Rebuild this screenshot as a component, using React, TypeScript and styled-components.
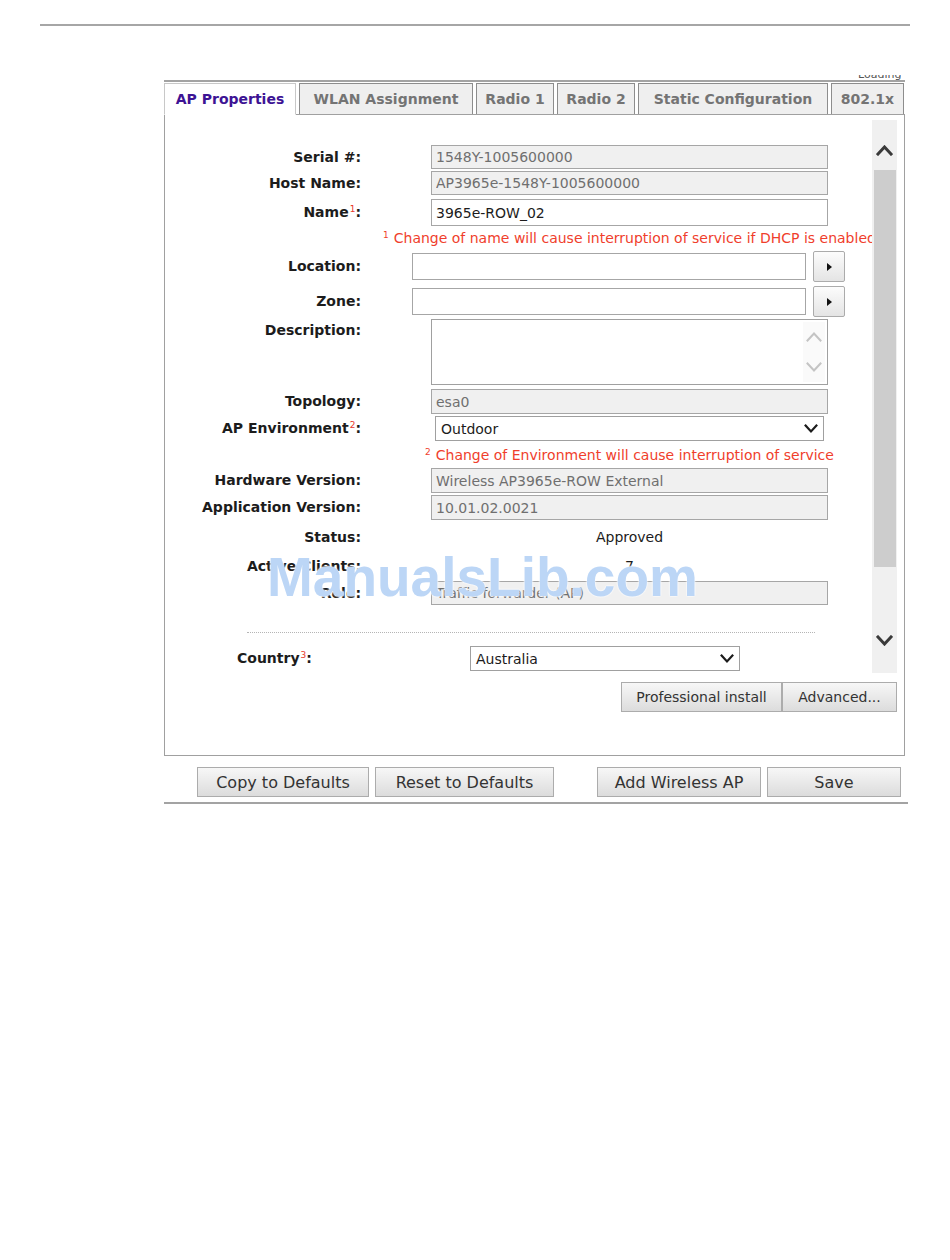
import React from "react";
import styled, { createGlobalStyle } from "styled-components";

const Global = createGlobalStyle`
  html, body { margin: 0; padding: 0; background: #fff; }
  body { font-family: "DejaVu Sans", Verdana, sans-serif; }
  * { box-sizing: border-box; }
`;

const Page = styled.div`
  position: relative;
  width: 950px;
  min-height: 1260px;
  padding-top: 24px;
`;

const TopRule = styled.div`
  margin: 0 40px;
  height: 2px;
  background: #a6a6a6;
`;

const Frame = styled.div`
  margin: 54px 0 0 164px;
  width: 744px;
`;

const TabStrip = styled.div`
  display: flex;
  gap: 3px;
  width: 741px;
  padding-top: 1px;
  border-top: 2px solid #a3a3a3;
  border-bottom: 1px solid #a0a0a0;
`;

const Tab = styled.div<{ $active?: boolean; $w: number }>`
  width: ${(p) => p.$w}px;
  flex: none;
  display: flex;
  align-items: center;
  justify-content: center;
  font-size: 14px;
  font-weight: bold;
  white-space: nowrap;
  color: ${(p) => (p.$active ? "#3d1394" : "#747474")};
  background: ${(p) => (p.$active ? "#fff" : "#efefef")};
  border: 1px solid ${(p) => (p.$active ? "#c8c8c8" : "#8d8d8d")};
  border-bottom: ${(p) => (p.$active ? "1px solid #fff" : "none")};
  margin-bottom: ${(p) => (p.$active ? "-1px" : "0")};
  height: ${(p) => (p.$active ? 32 : 31)}px;
`;

const Panel = styled.div`
  width: 741px;
  border: 1px solid #a0a0a0;
  border-top: none;
  padding: 5px 7px 43px 0;
`;

const ScrollArea = styled.div`
  display: flex;
`;

const Viewport = styled.div`
  width: 707px;
  height: 553px;
  overflow: hidden;
  padding-top: 25px;
`;

const Scrollbar = styled.div`
  width: 25px;
  height: 553px;
  background: #f0f0f0;
  display: flex;
  flex-direction: column;
  align-items: center;
`;

const ScrollIcon = styled.div<{ $mt: number }>`
  margin-top: ${(p) => p.$mt}px;
  display: flex;
  flex: none;
`;

const Thumb = styled.div`
  margin-top: 14px;
  width: 22px;
  height: 397px;
  background: #cdcdcd;
`;

const Row = styled.div<{ $mb: number }>`
  display: grid;
  grid-template-columns: 197px 510px;
  align-items: start;
  margin-bottom: ${(p) => p.$mb}px;
`;

const Label = styled.div<{ $lh: number }>`
  font-size: 14px;
  font-weight: bold;
  color: #1c1c1c;
  text-align: right;
  padding-right: 1px;
  line-height: ${(p) => p.$lh}px;
  white-space: nowrap;
`;

const Sup = styled.span`
  color: #e8382c;
  font-size: 9px;
  font-weight: normal;
  vertical-align: top;
  position: relative;
  top: -3px;
  margin-left: 1px;
`;

const Cell = styled.div<{ $indent: number }>`
  padding-left: ${(p) => p.$indent}px;
  display: flex;
  align-items: center;
  gap: 7px;
`;

const TextField = styled.input<{ $h: number; $w: number; $readOnlyLook?: boolean }>`
  width: ${(p) => p.$w}px;
  height: ${(p) => p.$h}px;
  margin: 0;
  padding: 0 4px;
  border: 1px solid #a6a6a6;
  border-radius: 0;
  outline: none;
  background: ${(p) => (p.$readOnlyLook ? "#f0f0f0" : "#fff")};
  color: ${(p) => (p.$readOnlyLook ? "#6f6f6f" : "#1c1c1c")};
  font-family: "DejaVu Sans", Verdana, sans-serif;
  font-size: 14px;
`;

const Note = styled.div`
  color: #f03e2c;
  font-size: 14px;
  line-height: 20px;
  white-space: nowrap;
`;

const NoteSup = styled.span`
  font-size: 9px;
  vertical-align: top;
  position: relative;
  top: -3px;
  margin-right: 5px;
`;

const LookupButton = styled.button`
  width: 32px;
  height: 31px;
  padding: 0;
  border: 1px solid #ababab;
  border-radius: 2px;
  background: linear-gradient(#fcfcfc, #e4e4e4);
  display: flex;
  align-items: center;
  justify-content: center;
  flex: none;
`;

const Triangle = styled.span`
  width: 0;
  height: 0;
  border-left: 5px solid #111;
  border-top: 4px solid transparent;
  border-bottom: 4px solid transparent;
`;

const AreaBox = styled.div`
  width: 397px;
  height: 66px;
  border: 1px solid #a0a0a0;
  background: #fff;
  display: flex;
  justify-content: flex-end;
  padding: 2px;
`;

const AreaScroll = styled.div`
  width: 22px;
  background: #fafafa;
  display: flex;
  flex-direction: column;
  align-items: center;
  justify-content: space-around;
`;

const SelectBox = styled.div<{ $w: number }>`
  width: ${(p) => p.$w}px;
  height: 25px;
  border: 1px solid #a0a0a0;
  background: #fff;
  padding: 0 5px;
  display: flex;
  align-items: center;
  justify-content: space-between;
  font-size: 14px;
  color: #1c1c1c;
`;

const Value = styled.div<{ $lh: number }>`
  width: 397px;
  text-align: center;
  font-size: 14px;
  color: #1c1c1c;
  line-height: ${(p) => p.$lh}px;
`;

const Separator = styled.div`
  margin: 27px 0 13px 82px;
  width: 568px;
  border-top: 1px dotted #b5b5b5;
`;

const CountryRow = styled.div`
  display: grid;
  grid-template-columns: 305px 1fr;
  align-items: center;
  margin-bottom: 1px;
`;

const CountryLabel = styled(Label)`
  text-align: left;
  padding-left: 72px;
`;

const ActionBar = styled.div`
  display: flex;
  justify-content: flex-end;
  margin-top: 9px;
`;

const Button = styled.button<{ $w: number; $size: number }>`
  width: ${(p) => p.$w}px;
  height: 30px;
  padding: 0;
  border: 1px solid #acacac;
  border-radius: 0;
  background: linear-gradient(#f7f7f7, #dcdcdc);
  color: #333;
  font-family: "DejaVu Sans", Verdana, sans-serif;
  font-size: ${(p) => p.$size}px;
  white-space: nowrap;
  flex: none;
`;

const Footer = styled.div`
  display: flex;
  padding: 11px 0 5px 33px;
  border-bottom: 2px solid #a3a3a3;
  width: 744px;
`;

const ButtonGroup = styled.div<{ $ml?: number }>`
  display: flex;
  gap: 6px;
  margin-left: ${(p) => p.$ml ?? 0}px;
`;

const Watermark = styled.div`
  position: absolute;
  left: 267px;
  top: 550px;
  font-family: "Liberation Sans", Arial, sans-serif;
  font-weight: bold;
  font-size: 55px;
  line-height: 55px;
  color: #bcd6f6;
  text-shadow: 0 0 2px #fff, 0 0 2px #fff;
  white-space: nowrap;
  pointer-events: none;
`;

const Clipped = styled.div`
  position: absolute;
  left: 858px;
  top: 75px;
  height: 5px;
  overflow: hidden;
  font-size: 11px;
  color: #555;
`;

const ClippedText = styled.div`
  margin-top: -7px;
`;

const Chevron = ({ up, color, sw, w, h }: { up?: boolean; color: string; sw: number; w: number; h: number }) => (
  <svg width={w} height={h} viewBox={`0 0 ${w} ${h}`} style={{ display: "block" }}>
    <path
      d={
        up
          ? `M${sw / 2 + 0.5} ${h - sw / 2 - 0.5} L${w / 2} ${sw / 2 + 0.5} L${w - sw / 2 - 0.5} ${h - sw / 2 - 0.5}`
          : `M${sw / 2 + 0.5} ${sw / 2 + 0.5} L${w / 2} ${h - sw / 2 - 0.5} L${w - sw / 2 - 0.5} ${sw / 2 + 0.5}`
      }
      fill="none"
      stroke={color}
      strokeWidth={sw}
      strokeLinecap="square"
    />
  </svg>
);

const ReadRow = ({ label, value, mb, h = 25 }: { label: string; value: string; mb: number; h?: number }) => (
  <Row $mb={mb}>
    <Label $lh={h}>{label}</Label>
    <Cell $indent={69}>
      <TextField $h={h} $w={397} $readOnlyLook readOnly value={value} />
    </Cell>
  </Row>
);

const LookupRow = ({ label, mb }: { label: string; mb: number }) => (
  <Row $mb={mb}>
    <Label $lh={31}>{label}</Label>
    <Cell $indent={50}>
      <TextField $h={27} $w={394} readOnly value="" />
      <LookupButton>
        <Triangle />
      </LookupButton>
    </Cell>
  </Row>
);

const tabs: [string, number][] = [
  ["AP Properties", 132],
  ["WLAN Assignment", 174],
  ["Radio 1", 78],
  ["Radio 2", 78],
  ["Static Configuration", 190],
  ["802.1x", 73],
];

export default function App() {
  return (
    <Page>
      <Global />
      <TopRule />
      <Clipped>
        <ClippedText>Loading</ClippedText>
      </Clipped>
      <Frame>
        <TabStrip>
          {tabs.map(([t, w], i) => (
            <Tab key={t} $w={w} $active={i === 0}>
              {t}
            </Tab>
          ))}
        </TabStrip>
        <Panel>
          <ScrollArea>
            <Viewport>
              <ReadRow label="Serial #:" value="1548Y-1005600000" mb={2} h={24} />
              <ReadRow label="Host Name:" value="AP3965e-1548Y-1005600000" mb={4} h={24} />
              <Row $mb={2}>
                <Label $lh={27}>
                  Name<Sup>1</Sup>:
                </Label>
                <Cell $indent={69}>
                  <TextField $h={27} $w={397} readOnly value="3965e-ROW_02" />
                </Cell>
              </Row>
              <Row $mb={3}>
                <span />
                <Cell $indent={21}>
                  <Note>
                    <NoteSup>1</NoteSup>Change of name will cause interruption of service if DHCP is enabled
                  </Note>
                </Cell>
              </Row>
              <LookupRow label="Location:" mb={4} />
              <LookupRow label="Zone:" mb={2} />
              <Row $mb={4}>
                <Label $lh={22}>Description:</Label>
                <Cell $indent={69}>
                  <AreaBox>
                    <AreaScroll>
                      <Chevron up color="#c4c4c4" sw={2} w={16} h={10} />
                      <Chevron color="#c4c4c4" sw={2} w={16} h={10} />
                    </AreaScroll>
                  </AreaBox>
                </Cell>
              </Row>
              <ReadRow label="Topology:" value="esa0" mb={2} />
              <Row $mb={4}>
                <Label $lh={25}>
                  AP Environment<Sup>2</Sup>:
                </Label>
                <Cell $indent={73}>
                  <SelectBox $w={389}>
                    <span>Outdoor</span>
                    <Chevron color="#1c1c1c" sw={2.2} w={14} h={9} />
                  </SelectBox>
                </Cell>
              </Row>
              <Row $mb={3}>
                <span />
                <Cell $indent={63}>
                  <Note>
                    <NoteSup>2</NoteSup>Change of Environment will cause interruption of service
                  </Note>
                </Cell>
              </Row>
              <ReadRow label="Hardware Version:" value="Wireless AP3965e-ROW External" mb={2} />
              <ReadRow label="Application Version:" value="10.01.02.0021" mb={5} />
              <Row $mb={4}>
                <Label $lh={24}>Status:</Label>
                <Cell $indent={69}>
                  <Value $lh={24}>Approved</Value>
                </Cell>
              </Row>
              <Row $mb={2}>
                <Label $lh={26}>Active Clients:</Label>
                <Cell $indent={69}>
                  <Value $lh={26}>7</Value>
                </Cell>
              </Row>
              <ReadRow label="Role:" value="Traffic forwarder (AP)" mb={0} h={24} />
              <Separator />
              <CountryRow>
                <CountryLabel $lh={25}>
                  Country<Sup>3</Sup>:
                </CountryLabel>
                <SelectBox $w={270}>
                  <span>Australia</span>
                  <Chevron color="#1c1c1c" sw={2.2} w={14} h={9} />
                </SelectBox>
              </CountryRow>
              <Row $mb={0}>
                <span />
                <Cell $indent={84}>
                  <Note>
                    <NoteSup>3</NoteSup>Change of Country will cause interruption of service
                  </Note>
                </Cell>
              </Row>
            </Viewport>
            <Scrollbar>
              <ScrollIcon $mt={25}>
                <Chevron up color="#3a3a3a" sw={3} w={17} h={11} />
              </ScrollIcon>
              <Thumb />
              <ScrollIcon $mt={68}>
                <Chevron color="#3a3a3a" sw={3} w={17} h={11} />
              </ScrollIcon>
            </Scrollbar>
          </ScrollArea>
          <ActionBar>
            <Button $w={161} $size={14}>Professional install</Button>
            <Button $w={115} $size={14}>Advanced...</Button>
          </ActionBar>
        </Panel>
        <Footer>
          <ButtonGroup>
            <Button $w={172} $size={16}>Copy to Defaults</Button>
            <Button $w={179} $size={16}>Reset to Defaults</Button>
          </ButtonGroup>
          <ButtonGroup $ml={43}>
            <Button $w={164} $size={16}>Add Wireless AP</Button>
            <Button $w={134} $size={16}>Save</Button>
          </ButtonGroup>
        </Footer>
      </Frame>
      <Watermark>ManualsLib.com</Watermark>
    </Page>
  );
}
